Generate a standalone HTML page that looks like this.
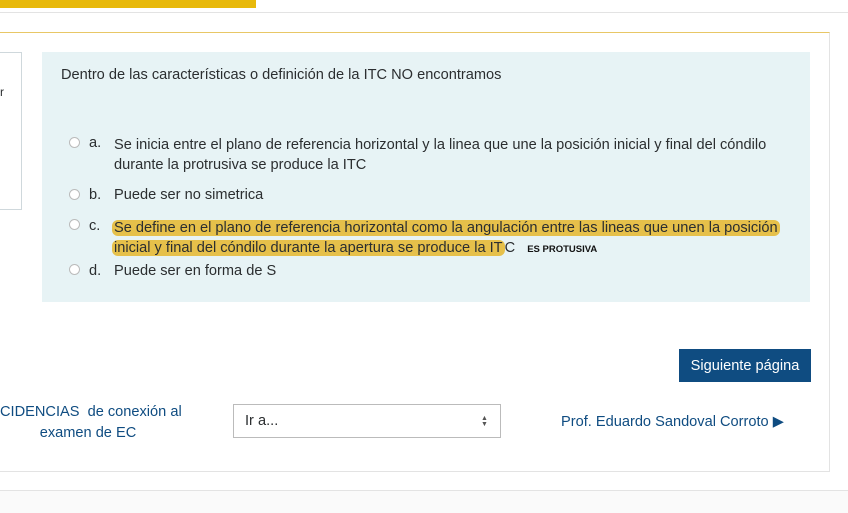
<!DOCTYPE html>
<html><head><meta charset="utf-8"><style>
body{margin:0;width:848px;height:512px;overflow:hidden;background:#fff;font-family:"Liberation Sans",sans-serif;color:#2b2e30;position:relative}
.a{position:absolute}
.t{font-size:14.6px;white-space:nowrap}
.r{position:absolute;width:9px;height:9px;border:1px solid #bbb;border-radius:50%;background:#fff}
.hl{background:#e6c04a;border-radius:6px;padding:0 2px;margin-left:-2px}
</style></head><body>
<div class="a" style="left:0;top:0;width:256px;height:8px;background:#e8b90b"></div>
<div class="a" style="left:0;top:12px;width:848px;height:1px;background:#e3e3e3"></div>
<div class="a" style="left:0;top:32px;width:829px;height:438px;border-top:1px solid #e8c766;border-right:1px solid #e3e3e3;border-bottom:1px solid #e3e3e3"></div>
<div class="a" style="left:-2px;top:52px;width:22px;height:156px;border:1px solid #cfd8dc"></div>
<div class="a t" style="left:0;top:85px;font-size:12px">r</div>
<div class="a" style="left:42px;top:52px;width:768px;height:250px;background:#e7f3f5"></div>
<div class="a t" style="left:61px;top:67px">Dentro de las características o definición de la ITC NO encontramos</div>
<div class="r" style="left:69px;top:137px"></div>
<div class="a t" style="left:89px;top:135px">a.</div>
<div class="a t" style="left:114px;top:135px;line-height:20px">Se inicia entre el plano de referencia horizontal y la linea que une la posición inicial y final del cóndilo<br>durante la protrusiva se produce la ITC</div>
<div class="r" style="left:69px;top:189px"></div>
<div class="a t" style="left:89px;top:187px">b.</div>
<div class="a t" style="left:114px;top:187px">Puede ser no simetrica</div>
<div class="r" style="left:69px;top:219px"></div>
<div class="a t" style="left:89px;top:218px">c.</div>
<div class="a t" style="left:114px;top:218px;line-height:20px"><span class="hl">Se define en el plano de referencia horizontal como la angulación entre las lineas que unen la posición</span><br><span class="hl">inicial y final del cóndilo durante la apertura se produce la IT</span>C <span style="font-size:9.5px;font-weight:bold;color:#111;margin-left:8px">ES PROTUSIVA</span></div>
<div class="r" style="left:69px;top:264px"></div>
<div class="a t" style="left:89px;top:263px">d.</div>
<div class="a t" style="left:114px;top:263px">Puede ser en forma de S</div>
<div class="a t" style="left:679px;top:349px;width:132px;height:33px;background:#0f4c81;color:#fff;text-align:center;line-height:35px">Siguiente página</div>
<div class="a t" style="left:0;top:402px;width:176px;text-align:center;line-height:21px;color:#0f4c81">CIDENCIAS&nbsp; de conexión al<br>examen de EC</div>
<div class="a" style="left:233px;top:404px;width:266px;height:32px;border:1px solid #bbb;background:#fff"></div>
<div class="a t" style="left:245px;top:413px">Ir a...</div>
<div class="a" style="left:481px;top:416px;font-size:7px;line-height:6px;color:#555">▲<br>▼</div>
<div class="a t" style="left:561px;top:413px;color:#0f4c81">Prof. Eduardo Sandoval Corroto ▶</div>
<div class="a" style="left:0;top:490px;width:848px;height:22px;background:#fafafa;border-top:1px solid #e3e3e3"></div>
</body></html>
